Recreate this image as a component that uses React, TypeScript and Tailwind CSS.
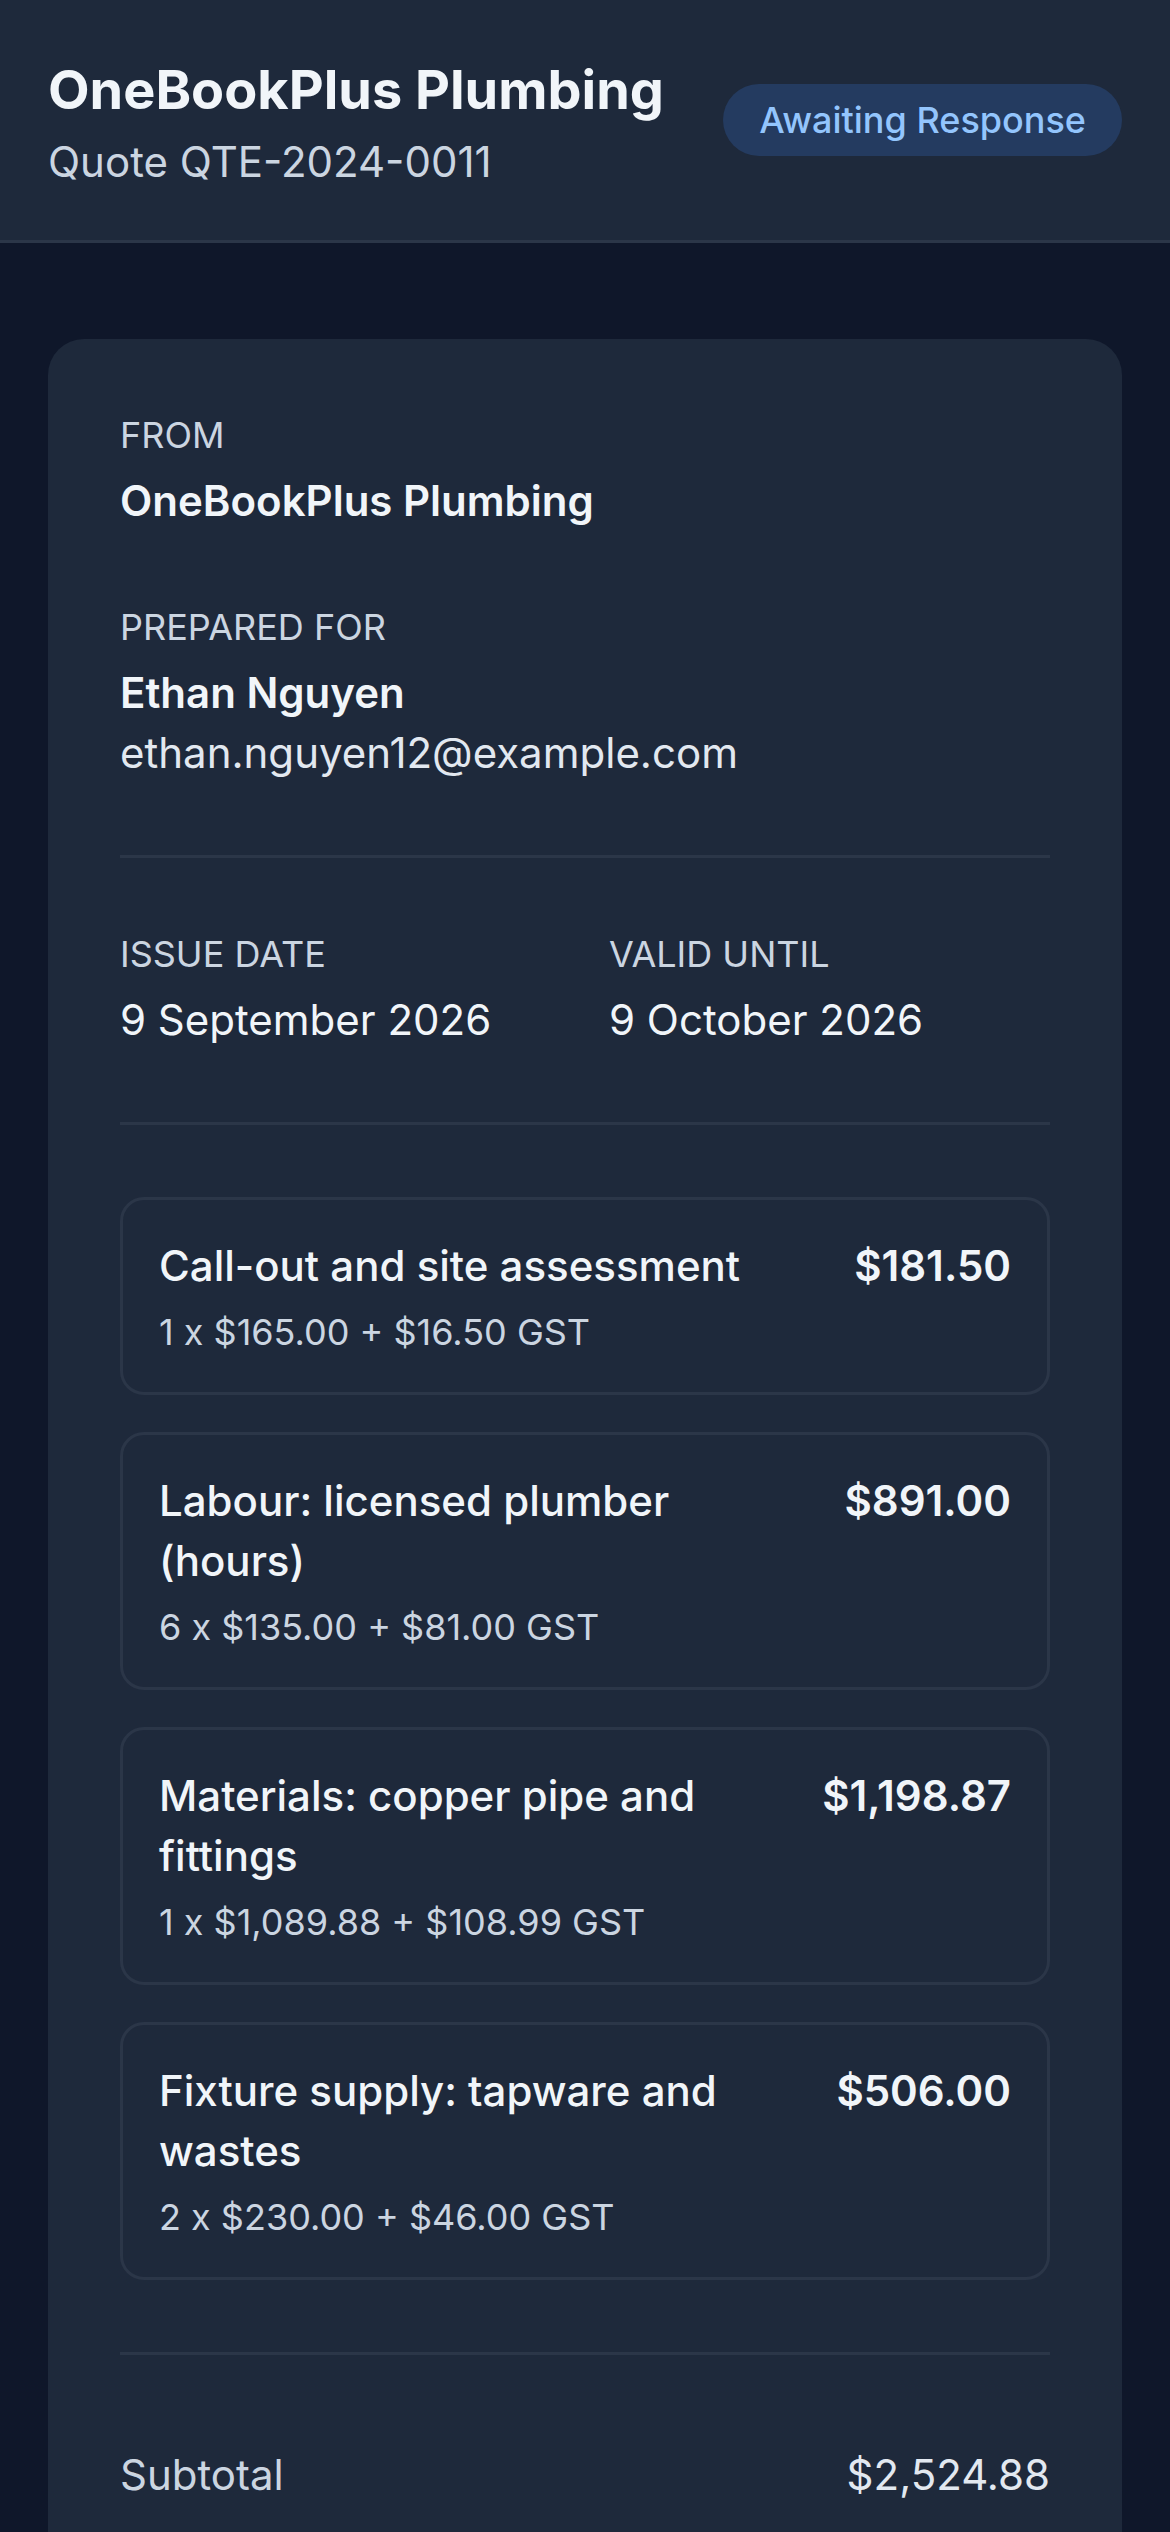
import React from "react";

type LineItem = {
    name: string;
    detail: string;
    total: string;
};

const items: LineItem[] = [
    {
        name: "Call-out and site assessment",
        detail: "1 x $165.00 + $16.50 GST",
        total: "$181.50",
    },
    {
        name: "Labour: licensed plumber (hours)",
        detail: "6 x $135.00 + $81.00 GST",
        total: "$891.00",
    },
    {
        name: "Materials: copper pipe and fittings",
        detail: "1 x $1,089.88 + $108.99 GST",
        total: "$1,198.87",
    },
    {
        name: "Fixture supply: tapware and wastes",
        detail: "2 x $230.00 + $46.00 GST",
        total: "$506.00",
    },
];

const Label = ({ children }: { children: React.ReactNode }) => (
    <div className="text-[36px] leading-[48px] uppercase text-[#cbd5e1]">
        {children}
    </div>
);

const LineItemRow = ({ item }: { item: LineItem }) => (
    <div className="rounded-[24px] border-[3px] border-[#2b3648] p-[36px]">
        <div className="flex items-start justify-between gap-[48px]">
            <div className="flex-1 text-[42px] leading-[60px] font-medium text-[#f1f5f9]">
                {item.name}
            </div>
            <div className="shrink-0 text-[42px] leading-[60px] font-semibold text-[#f1f5f9]">
                {item.total}
            </div>
        </div>
        <div className="mt-[12px] text-[36px] leading-[48px] text-[#cbd5e1]">
            {item.detail}
        </div>
    </div>
);

export default function App() {
    return (
        <div
            className="min-h-screen bg-[#0f172a] text-[#f1f5f9]"
            style={{ fontFamily: "Inter, 'Noto Sans', sans-serif" }}
        >
            {/* header */}
            <header className="flex items-center justify-between gap-[36px] border-b-[3px] border-[#2b3648] bg-[#1e293b] px-[48px] py-[48px]">
                <div className="min-w-0">
                    <h1 className="text-[54px] leading-[84px] font-bold text-[#f1f5f9]">
                        OneBookPlus Plumbing
                    </h1>
                    <p className="text-[42px] leading-[60px] text-[#cbd5e1]">
                        Quote QTE-2024-0011
                    </p>
                </div>
                <span className="shrink-0 rounded-full bg-[#243b60] px-[36px] py-[12px] text-[36px] leading-[48px] font-medium text-[#93c5fd]">
                    Awaiting Response
                </span>
            </header>

            <main className="px-[48px] pt-[96px] pb-[96px]">
                <div className="rounded-[36px] bg-[#1e293b] p-[72px]">
                    {/* parties */}
                    <div className="flex flex-col gap-[72px] pb-[72px]">
                        <div>
                            <Label>From</Label>
                            <div className="mt-[12px] text-[42px] leading-[60px] font-semibold">
                                OneBookPlus Plumbing
                            </div>
                        </div>
                        <div>
                            <Label>Prepared for</Label>
                            <div className="mt-[12px] text-[42px] leading-[60px] font-semibold">
                                Ethan Nguyen
                            </div>
                            <div className="text-[42px] leading-[60px] text-[#e2e8f0]">
                                ethan.nguyen12@example.com
                            </div>
                        </div>
                    </div>

                    {/* dates */}
                    <div className="grid grid-cols-2 gap-[48px] border-y-[3px] border-[#2b3648] py-[72px]">
                        <div>
                            <Label>Issue date</Label>
                            <div className="mt-[12px] text-[42px] leading-[60px] text-[#f1f5f9]">
                                9 September 2026
                            </div>
                        </div>
                        <div>
                            <Label>Valid until</Label>
                            <div className="mt-[12px] text-[42px] leading-[60px] text-[#f1f5f9]">
                                9 October 2026
                            </div>
                        </div>
                    </div>

                    {/* line items */}
                    <div className="flex flex-col gap-[37px] border-b-[3px] border-[#2b3648] py-[72px]">
                        {items.map((item) => (
                            <LineItemRow key={item.name} item={item} />
                        ))}
                    </div>

                    {/* totals */}
                    <div className="pt-[72px]">
                        <div className="flex items-center justify-between py-[18px]">
                            <span className="text-[42px] leading-[60px] text-[#cbd5e1]">
                                Subtotal
                            </span>
                            <span className="text-[42px] leading-[60px] text-[#e2e8f0]">
                                $2,524.88
                            </span>
                        </div>
                    </div>
                </div>
            </main>
        </div>
    );
}
